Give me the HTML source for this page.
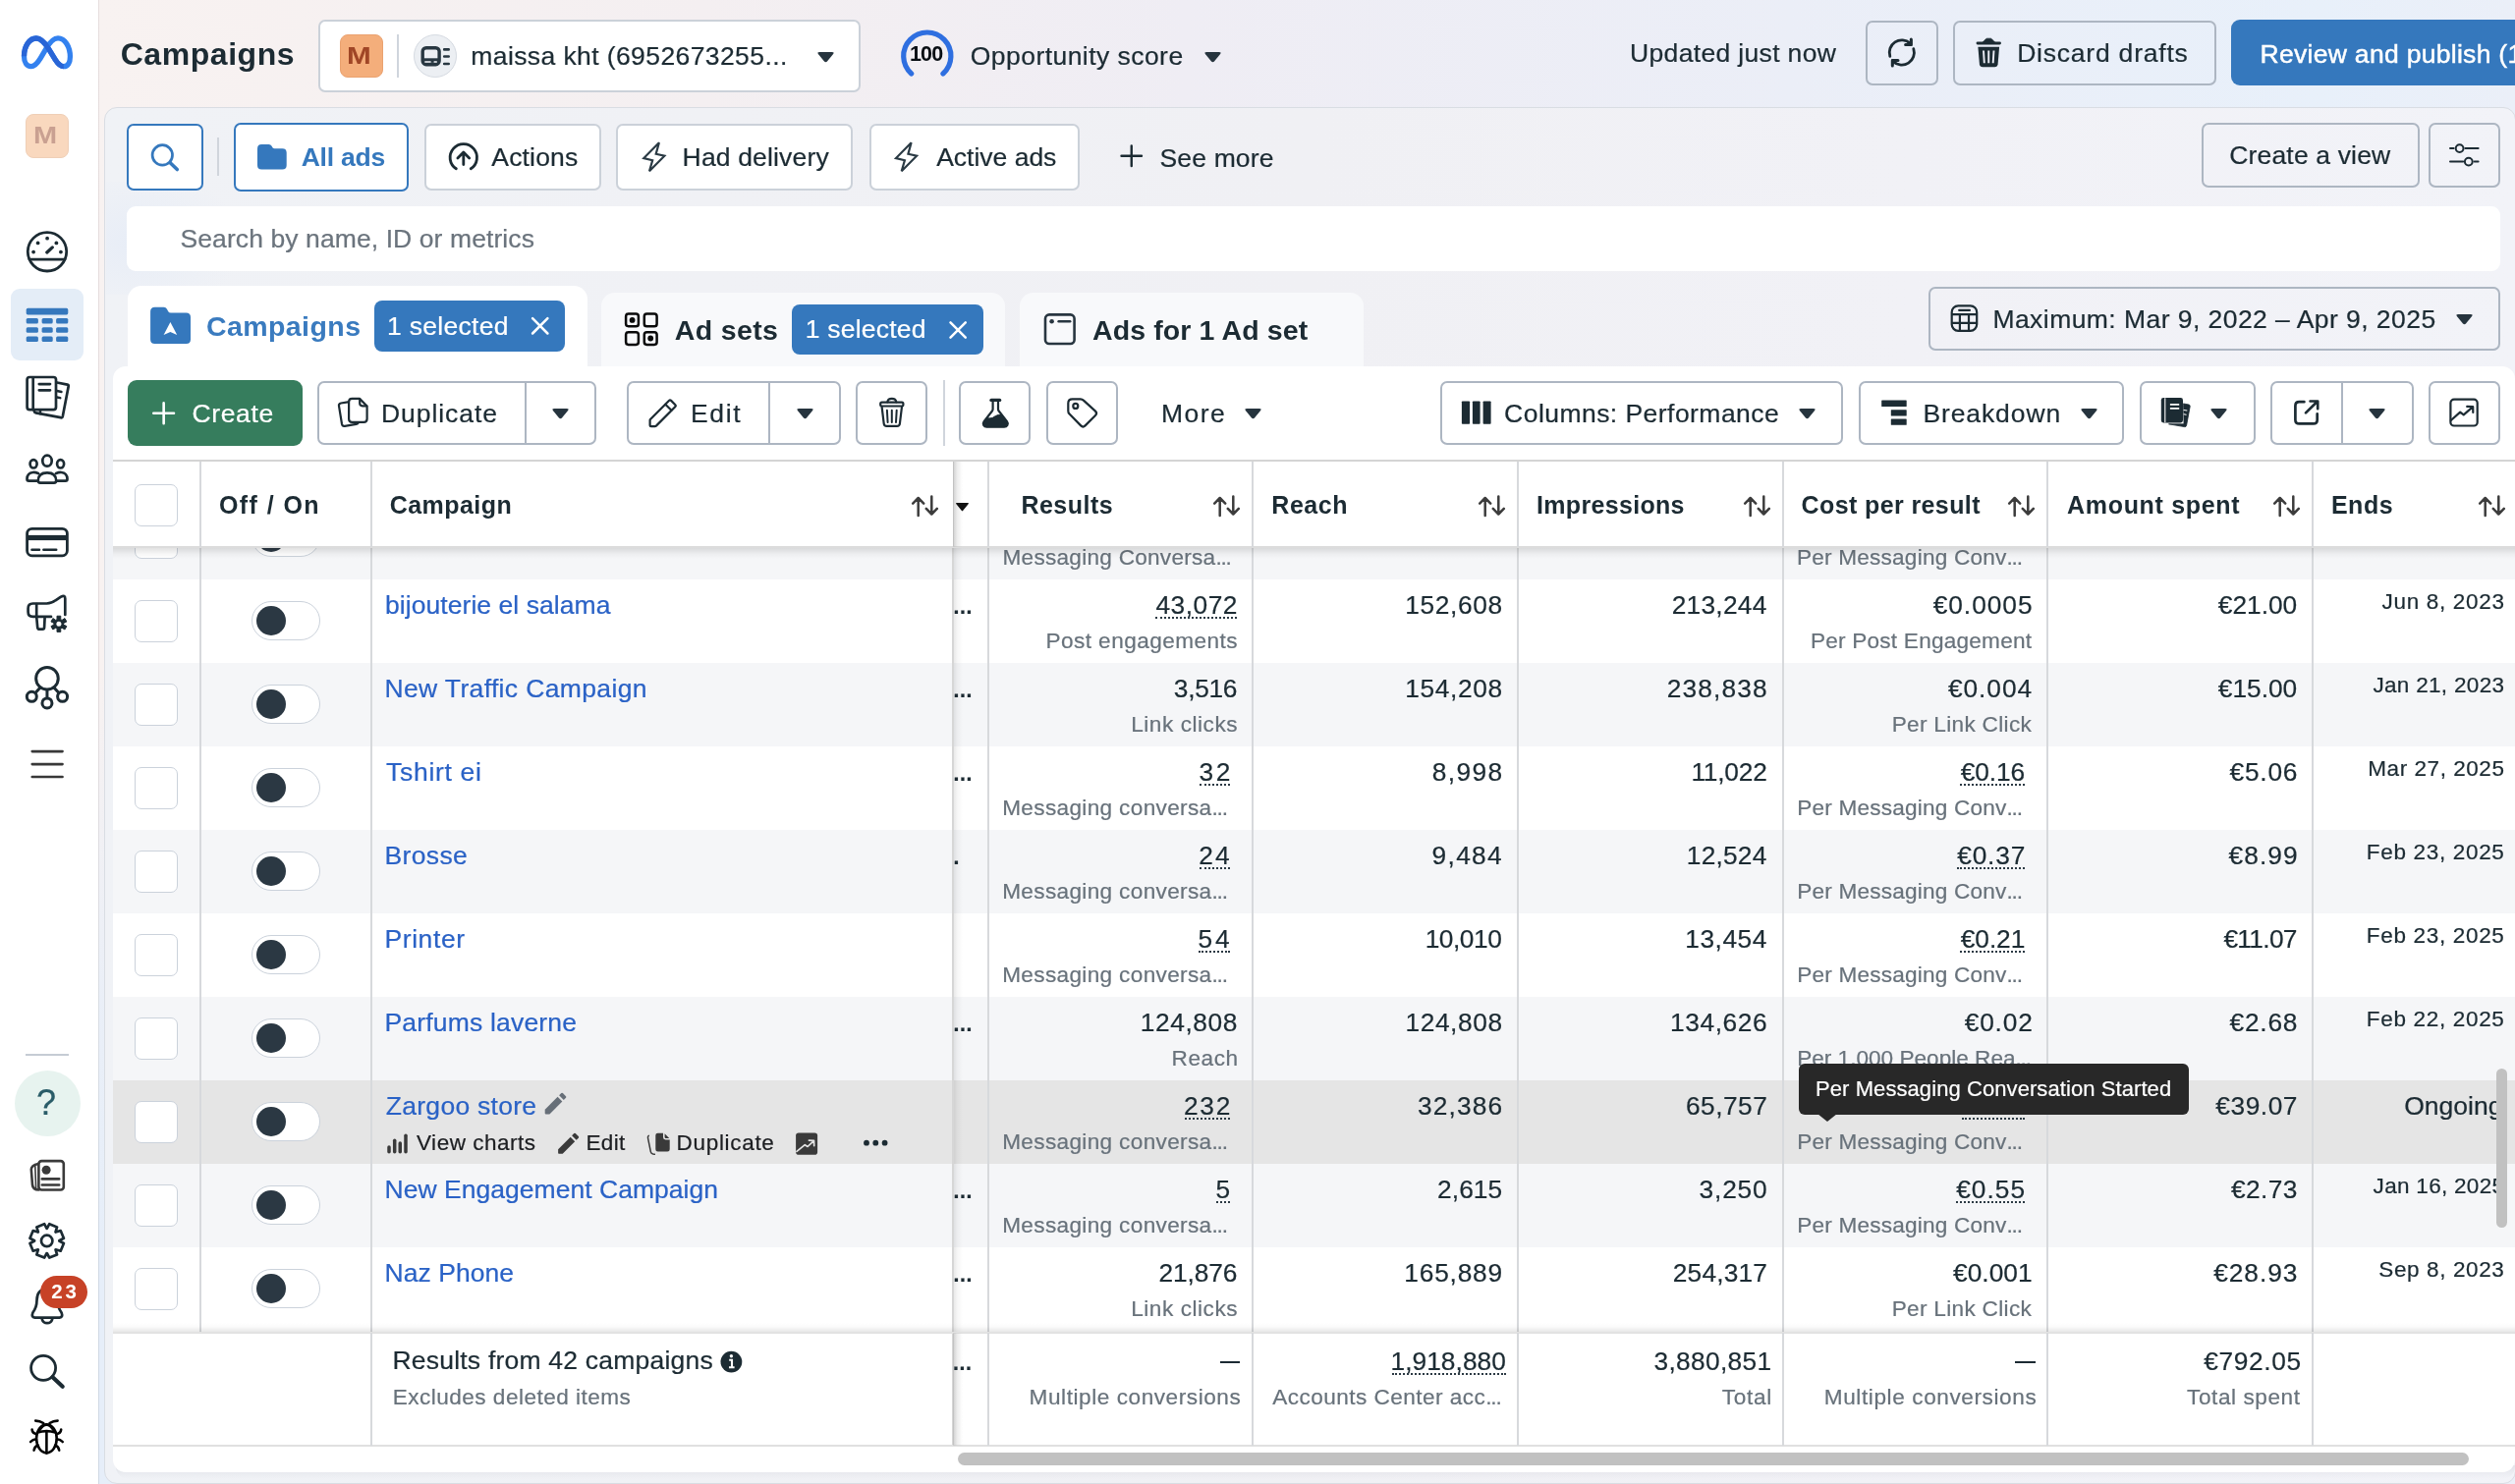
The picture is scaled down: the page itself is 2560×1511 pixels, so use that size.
<!DOCTYPE html>
<html><head><meta charset="utf-8"><title>Campaigns</title>
<style>
html,body{margin:0;padding:0;}
body{width:2560px;height:1511px;overflow:hidden;position:relative;background:#fff;font-family:"Liberation Sans",sans-serif;}
.b{position:absolute;box-sizing:border-box;}
.t{position:absolute;white-space:nowrap;line-height:1;-webkit-text-stroke:0.22px;}
.tb{-webkit-text-stroke:0;}
#root{position:absolute;left:0;top:0;width:2560px;height:1511px;overflow:hidden;will-change:transform;}
.btn{border:2px solid #adb6c2;border-radius:7px;background:#fff;}
.btl{border-color:#cbd1d9;}
.cb{border:1.8px solid #cbd2db;border-radius:7px;background:#fff;}
.tg{border:1.8px solid #cbd2db;border-radius:21px;background:#fff;}
.kn{border-radius:50%;background:#2b3843;}
.du{border-bottom:3px dotted #3b4953;}
svg{overflow:visible;}
</style></head><body><div id="root">
<div class="b" style="left:100.0px;top:0.0px;width:2460.0px;height:1511.0px;background:linear-gradient(90deg,#f8f2f1 0%,#f4eff1 25%,#efedf4 45%,#ebeef7 70%,#e8f0fa 92%,#ebeff8 100%);"></div>
<div class="b" style="left:100.0px;top:0.0px;width:25.0px;height:1511.0px;background:linear-gradient(180deg,rgba(230,238,249,0) 0,rgba(230,238,249,0) 45%,rgba(230,238,249,0.8) 68%,#e6eef9 85%);"></div>
<div class="b" style="left:99.7px;top:0.0px;width:1.8px;height:1511.0px;background:linear-gradient(180deg,#e6dede 0,#e4dcdd 45%,#d9dde4 68%,#d0d9e4 85%);"></div>
<div class="b" style="left:106.0px;top:109.0px;width:2455.0px;height:1401.8px;background:linear-gradient(90deg,#f0f2f6 0,#f0f1f5 25%,#f0f0f4 50%,#f1f1f6 75%,#f2f3f8 100%);border:1.5px solid #d9dde3;border-radius:13px;"></div>
<div class="b" style="left:107.5px;top:185.0px;width:222.5px;height:115.0px;background:radial-gradient(ellipse 110px 75px at 30px 62px,rgba(228,235,247,0.7),rgba(226,234,247,0) 100%);"></div>
<div class="b" style="left:118.0px;top:1492.0px;width:2442.0px;height:14.0px;background:linear-gradient(180deg,rgba(20,30,50,0.07),rgba(20,30,50,0.0));border-radius:0 0 13px 13px;"></div>
<div class="b" style="left:129.0px;top:209.5px;width:2416.0px;height:66.0px;background:#fff;border-radius:9px;"></div>
<div class="b" style="left:26.0px;top:116.2px;width:44.0px;height:44.4px;background:#f9d8be;border-radius:8px;border:1.5px solid #efcfb7;"></div>
<span class="t tb" style="left:34.3px;top:126.4px;font-size:23.85px;color:#c9a091;font-weight:700;transform:scaleX(1.216);transform-origin:left center;">M</span>
<div class="b" style="left:10.7px;top:293.6px;width:74.1px;height:73.8px;background:#e4edf7;border-radius:9px;"></div>
<div class="b" style="left:26.0px;top:1072.5px;width:44.0px;height:2.0px;background:#c5ccd4;"></div>
<div class="b" style="left:14.5px;top:1089.5px;width:67.0px;height:67.0px;background:#e7f3ef;border-radius:50%;"></div>
<svg class="b" style="left:0;top:0" width="100" height="1511" viewBox="0 0 100 1511" fill="none" stroke-linecap="round" stroke-linejoin="round"><path d="M31.7 67.7 C27.2 67.7 24.5 63.4 24.5 57.3 C24.5 47 30 39 36.9 39 C42 39 45.6 43.3 49.6 49.8 L56.2 60.6 C59.1 65.2 61.5 67.7 64.8 67.7 C69 67.7 71.4 63.7 71.4 57.8 C71.4 47.4 66 38.9 59 38.9 C54 38.9 50.4 43.6 46.9 49.6 L41 59.6 C37.6 65.1 35 67.7 31.7 67.7 Z" stroke="#3381ef" stroke-width="5.3"/><path d="M24.5 57.3 C24.5 47 30 39 36.9 39 C42 39 45.6 43.3 49.6 49.8 L56.2 60.6 C59.1 65.2 61.5 67.7 64.8 67.7" stroke="#2965d6" stroke-width="5.3" stroke-linecap="butt"/><g stroke="#1c2b33" stroke-width="2.8"><circle cx="48" cy="256.3" r="19.7"/><path d="M30 264.1 H66"/><path d="M47.8 257 L53.3 251.9" stroke-width="3.2"/></g><circle cx="48.1" cy="242.7" r="1.9" fill="#1c2b33"/><circle cx="38.6" cy="247.4" r="1.9" fill="#1c2b33"/><circle cx="57.4" cy="247.4" r="1.9" fill="#1c2b33"/><circle cx="34.1" cy="256.6" r="1.9" fill="#1c2b33"/><circle cx="61.9" cy="256.6" r="1.9" fill="#1c2b33"/><g fill="#3578bd"><rect x="26.7" y="313.8" width="42.6" height="6.6" rx="1.6"/><rect x="26.7" y="324.1" width="12.2" height="5.5" rx="1.5"/><rect x="42.6" y="324.1" width="11.1" height="5.5" rx="1.5"/><rect x="57.1" y="324.1" width="12.2" height="5.5" rx="1.5"/><rect x="26.7" y="333.3" width="12.2" height="5.5" rx="1.5"/><rect x="42.6" y="333.3" width="11.1" height="5.5" rx="1.5"/><rect x="57.1" y="333.3" width="12.2" height="5.5" rx="1.5"/><rect x="26.7" y="342.5" width="12.2" height="5.5" rx="1.5"/><rect x="42.6" y="342.5" width="11.1" height="5.5" rx="1.5"/><rect x="57.1" y="342.5" width="12.2" height="5.5" rx="1.5"/></g><g stroke="#1c2b33" stroke-width="2.7"><path d="M58 389.5 L68.6 391.6 Q70 392 69.7 393.4 L63.8 424 Q63.4 425.6 61.8 425.2 L36.5 420.3 Q35 420 34.8 418.6"/><path d="M41 418.2 V421.2" stroke-width="2.4"/><path d="M58 398 L62.5 399 M58 404.5 L61.3 405.2" stroke-width="2.4"/><rect x="27.6" y="384" width="29.4" height="33.2" rx="2.6" fill="#fff"/><path d="M33.7 384.5 V417"/><path d="M39.8 391.1 H51 M39.8 397.3 H51"/></g><g stroke="#1c2b33" stroke-width="2.7" fill="#fff"><ellipse cx="34.1" cy="472.3" rx="3.5" ry="4.2"/><ellipse cx="61.6" cy="472.3" rx="3.5" ry="4.2"/><path d="M39 482 Q36 480.8 33.5 481 Q27.6 481.6 27.5 487.8 Q27.5 489.6 29.4 489.6 H37.5"/><path d="M57 482 Q60 480.8 62.5 481 Q68.4 481.6 68.5 487.8 Q68.5 489.6 66.6 489.6 H58.5"/><ellipse cx="48" cy="469.2" rx="4.7" ry="5.5"/><path d="M38.8 489.5 Q38.8 481.3 48 481.3 Q57.2 481.3 57.2 489.5 Q57.2 491.6 55 491.6 H41 Q38.8 491.6 38.8 489.5 Z"/></g><g stroke="#1c2b33" stroke-width="2.8"><rect x="27.6" y="538.3" width="40.8" height="27.5" rx="5"/><path d="M32.5 559.7 H40 M44.4 559.7 H57.2" stroke-width="2.6"/></g><rect x="27" y="544.9" width="42" height="5.2" fill="#1c2b33"/><g stroke="#1c2b33" stroke-width="2.7"><path d="M52 627.9 H33.5 Q28.6 627.9 28.6 623 V619.4 Q28.6 614.5 33.5 614.5 H47.5 Q52.5 614.5 56.5 611.3 L62 607.6 Q66.3 605.6 66.3 609.5 V626"/><path d="M37.2 615 V628 L38.2 638.8 Q38.4 640.7 40.2 640.7 H43.3 Q45 640.7 45.1 638.8 L45.6 628.4"/></g><path d="M64.84 636.07 L67.85 637.67 L65.93 641.00 L63.04 639.19 L61.71 639.96 L61.82 643.37 L57.98 643.37 L58.09 639.96 L56.76 639.19 L53.87 641.00 L51.95 637.67 L54.96 636.07 L54.96 634.53 L51.95 632.93 L53.87 629.60 L56.76 631.41 L58.09 630.64 L57.98 627.23 L61.82 627.23 L61.71 630.64 L63.04 631.41 L65.93 629.60 L67.85 632.93 L64.84 634.53 Z" fill="#1c2b33" stroke="#1c2b33" stroke-width="1"/><circle cx="59.9" cy="635.3" r="2.5" fill="#fff"/><g stroke="#1c2b33" stroke-width="3"><path d="M40.8 700.3 L36 705.5 M47.95 702.5 V710.5 M55.1 700.3 L59.9 705.5"/><circle cx="47.95" cy="690.7" r="11.3"/><circle cx="32.3" cy="709.3" r="5"/><circle cx="47.95" cy="715.9" r="5"/><circle cx="63.6" cy="709.3" r="5"/></g><path d="M32.8 765.1 H63.5 M32.8 778.1 H63.5 M32.8 791 H63.5" stroke="#383838" stroke-width="2.7"/><g stroke="#3a3a3a" stroke-width="2.6"><rect x="39.4" y="1182.1" width="25.4" height="29.4" rx="3"/><path d="M39 1185 Q32 1186.5 31.8 1190.5 L33 1206.5 Q33.5 1211.3 39.4 1211.4"/><path d="M35.8 1187.5 L36.6 1209.5" stroke-width="1.6"/><path d="M42.8 1200.4 H60.2 M42.8 1206.5 H60.2"/></g><circle cx="47.1" cy="1191.3" r="4.5" fill="#3a3a3a"/><path d="M60.30 1263.50 L64.91 1265.99 L61.70 1273.74 L56.68 1272.24 L56.54 1272.38 L58.04 1277.40 L50.29 1280.61 L47.80 1276.00 L47.60 1276.00 L45.11 1280.61 L37.36 1277.40 L38.86 1272.38 L38.72 1272.24 L33.70 1273.74 L30.49 1265.99 L35.10 1263.50 L35.10 1263.30 L30.49 1260.81 L33.70 1253.06 L38.72 1254.56 L38.86 1254.42 L37.36 1249.40 L45.11 1246.19 L47.60 1250.80 L47.80 1250.80 L50.29 1246.19 L58.04 1249.40 L56.54 1254.42 L56.68 1254.56 L61.70 1253.06 L64.91 1260.81 L60.30 1263.30 Z" stroke="#1c2b33" stroke-width="2.7"/><circle cx="47.7" cy="1263.4" r="5.7" stroke="#1c2b33" stroke-width="2.7"/><g stroke="#1c2b33" stroke-width="2.7"><path d="M48 1312.5 Q37.5 1312.5 37.5 1324 Q37.5 1331 33.4 1336.5 Q31.6 1341.2 35.5 1341.6 H60.5 Q64.4 1341.2 62.6 1336.5 Q58.5 1331 58.5 1324 Q58.5 1312.5 48 1312.5 Z"/><path d="M42.8 1343.4 Q44 1347.2 48 1347.2 Q52 1347.2 53.2 1343.4"/></g><circle cx="44.1" cy="1392.8" r="12.5" stroke="#1c2b33" stroke-width="2.8"/><path d="M53.6 1402.3 L63.7 1411.7" stroke="#1c2b33" stroke-width="4.2"/><g stroke="#050505" stroke-width="2.6"><ellipse cx="47.4" cy="1464.8" rx="10.3" ry="14.6"/><path d="M47.4 1457.8 V1479.6"/><path d="M38.3 1458.6 Q47.4 1455.6 56.5 1458.6"/><path d="M40 1456.5 Q47.4 1445 54.8 1456.5"/><path d="M44.2 1449 Q40.5 1446.6 36.2 1446.6 M50.6 1449 Q54.3 1446.6 58.6 1446.6"/><path d="M37.6 1460.3 Q33 1459.5 32.6 1455.6 M57.2 1460.3 Q61.8 1459.5 62.2 1455.6"/><path d="M36.9 1465.3 Q33.3 1465.5 31.1 1468 M57.9 1465.3 Q61.5 1465.5 63.7 1468"/><path d="M38.6 1471.5 Q35.2 1472.7 34.6 1476.6 M56.2 1471.5 Q59.6 1472.7 60.2 1476.6"/></g></svg>
<span class="t" style="left:36.9px;top:1105.0px;font-size:36px;color:#2a5c68;">?</span>
<div class="b" style="left:41.0px;top:1298.5px;width:48.0px;height:33.5px;background:#c74227;border-radius:17px;"></div>
<span class="t tb" style="left:52.3px;top:1304.5px;font-size:20.5px;color:#fff;font-weight:700;letter-spacing:2.777px;">23</span>
<span class="t tb" style="left:122.7px;top:38.5px;font-size:32px;color:#1c2b33;font-weight:700;letter-spacing:0.552px;">Campaigns</span>
<div class="b btn btl" style="left:324.0px;top:19.9px;width:552.0px;height:74.1px;"></div>
<div class="b" style="left:345.5px;top:35.0px;width:44.0px;height:44.0px;background:#f4ae7b;border-radius:8px;border:1px solid #eaa270;"></div>
<span class="t tb" style="left:353.4px;top:45.2px;font-size:23.85px;color:#a04626;font-weight:700;transform:scaleX(1.245);transform-origin:left center;">M</span>
<div class="b" style="left:404.3px;top:35.0px;width:1.7px;height:44.3px;background:#cfd5dd;"></div>
<div class="b" style="left:421.2px;top:35.2px;width:43.8px;height:43.8px;background:#eceff3;border-radius:50%;border:1.5px solid #d5dae1;"></div>
<span class="t" style="left:479.3px;top:44.1px;font-size:26.5px;color:#1c2b33;letter-spacing:0.403px;">maissa kht (6952673255...</span>
<svg class="b" style="left:832px;top:52.5px" width="17" height="10.5" viewBox="0 0 17 10.5"><path d="M2.2 0 H14.8 Q17.8 0 15.9 2.3 L10 9.4 Q8.5 11 7 9.4 L1.1 2.3 Q-0.8 0 2.2 0 Z" fill="#26343e"/></svg>
<span class="t tb" style="left:925.9px;top:44.6px;font-size:21.5px;color:#0a0f14;font-weight:700;letter-spacing:-0.727px;">100</span>
<span class="t" style="left:987.8px;top:44.3px;font-size:26.5px;color:#1c2b33;letter-spacing:0.448px;">Opportunity score</span>
<svg class="b" style="left:1225.5px;top:52.5px" width="17" height="10.5" viewBox="0 0 17 10.5"><path d="M2.2 0 H14.8 Q17.8 0 15.9 2.3 L10 9.4 Q8.5 11 7 9.4 L1.1 2.3 Q-0.8 0 2.2 0 Z" fill="#26343e"/></svg>
<span class="t" style="left:1659.0px;top:40.6px;font-size:26.5px;color:#1c2b33;letter-spacing:0.343px;">Updated just now</span>
<div class="b btn" style="left:1899.2px;top:20.5px;width:73.5px;height:66.0px;background:transparent;"></div>
<div class="b btn" style="left:1987.5px;top:20.5px;width:268.2px;height:66.0px;background:transparent;"></div>
<span class="t" style="left:2053.2px;top:41.1px;font-size:26.5px;color:#1c2b33;letter-spacing:0.780px;">Discard drafts</span>
<div class="b" style="left:2271.0px;top:20.0px;width:309.0px;height:66.5px;background:#3578bd;border-radius:9px;"></div>
<span class="t" style="left:2300.5px;top:41.8px;font-size:26.5px;color:#fff;letter-spacing:0.3px;-webkit-text-stroke:0.45px #fff;">Review and publish (1)</span>
<div class="b btn" style="left:129.0px;top:125.5px;width:77.5px;height:68.0px;border-color:#3578bd;"></div>
<div class="b" style="left:221.0px;top:140.0px;width:2.0px;height:39.0px;background:#d0d5dc;"></div>
<div class="b btn" style="left:238.0px;top:124.5px;width:178.0px;height:70.0px;border-color:#3578bd;"></div>
<span class="t tb" style="left:306.7px;top:146.8px;font-size:26.5px;color:#3578bd;font-weight:700;letter-spacing:-0.222px;">All ads</span>
<div class="b btn btl" style="left:431.5px;top:125.5px;width:180.0px;height:68.3px;"></div>
<span class="t" style="left:500.3px;top:146.8px;font-size:26.5px;color:#1c2b33;letter-spacing:0.168px;">Actions</span>
<div class="b btn btl" style="left:627.3px;top:125.5px;width:241.0px;height:68.3px;"></div>
<span class="t" style="left:694.6px;top:146.8px;font-size:26.5px;color:#1c2b33;letter-spacing:0.162px;">Had delivery</span>
<div class="b btn btl" style="left:884.5px;top:125.5px;width:214.5px;height:68.3px;"></div>
<span class="t" style="left:953.2px;top:146.8px;font-size:26.5px;color:#1c2b33;letter-spacing:-0.008px;">Active ads</span>
<span class="t" style="left:1180.5px;top:148.1px;font-size:26.5px;color:#1c2b33;letter-spacing:0.154px;">See more</span>
<div class="b btn" style="left:2241.0px;top:125.0px;width:222.0px;height:65.5px;background:transparent;"></div>
<span class="t" style="left:2269.3px;top:145.1px;font-size:26.5px;color:#1c2b33;letter-spacing:0.156px;">Create a view</span>
<div class="b btn" style="left:2472.0px;top:125.0px;width:72.5px;height:65.5px;background:transparent;"></div>
<span class="t" style="left:183.5px;top:230.1px;font-size:26.5px;color:#6b747d;letter-spacing:0.091px;">Search by name, ID or metrics</span>
<div class="b" style="left:129.5px;top:291.0px;width:468.0px;height:94.0px;background:#fff;border-radius:14px 14px 0 0;"></div>
<div class="b" style="left:612.0px;top:298.0px;width:411.0px;height:87.0px;background:#f8f9fb;border-radius:14px 14px 0 0;"></div>
<div class="b" style="left:1038.0px;top:298.0px;width:350.0px;height:87.0px;background:#f8f9fb;border-radius:14px 14px 0 0;"></div>
<span class="t tb" style="left:209.9px;top:318.4px;font-size:28.5px;color:#3a7bbf;font-weight:700;letter-spacing:0.440px;">Campaigns</span>
<div class="b" style="left:381.0px;top:306.0px;width:194.0px;height:51.5px;background:#3578bd;border-radius:8px;"></div>
<span class="t" style="left:394.0px;top:318.6px;font-size:26.5px;color:#fff;letter-spacing:0.304px;">1 selected</span>
<span class="t tb" style="left:686.8px;top:321.9px;font-size:28.5px;color:#1c2b33;font-weight:700;letter-spacing:0.354px;">Ad sets</span>
<div class="b" style="left:806.0px;top:309.5px;width:195.0px;height:51.5px;background:#3578bd;border-radius:8px;"></div>
<span class="t" style="left:819.7px;top:322.1px;font-size:26.5px;color:#fff;letter-spacing:0.226px;">1 selected</span>
<span class="t tb" style="left:1112.0px;top:321.9px;font-size:28.5px;color:#1c2b33;font-weight:700;letter-spacing:0.113px;">Ads for 1 Ad set</span>
<div class="b btn" style="left:1962.5px;top:291.5px;width:582.5px;height:65.0px;background:transparent;"></div>
<span class="t" style="left:2028.4px;top:311.6px;font-size:26.5px;color:#1c2b33;letter-spacing:0.447px;">Maximum: Mar 9, 2022 – Apr 9, 2025</span>
<svg class="b" style="left:2500px;top:319.5px" width="17" height="10.5" viewBox="0 0 17 10.5"><path d="M2.2 0 H14.8 Q17.8 0 15.9 2.3 L10 9.4 Q8.5 11 7 9.4 L1.1 2.3 Q-0.8 0 2.2 0 Z" fill="#26343e"/></svg>
<div class="b" style="left:114.5px;top:372.5px;width:2445.5px;height:1126.0px;background:#fff;border-radius:13px;"></div>
<div class="b" style="left:129.5px;top:387.0px;width:178.0px;height:66.5px;background:#367d5d;border-radius:9px;"></div>
<span class="t" style="left:195.4px;top:408.1px;font-size:26.5px;color:#fff;letter-spacing:0.637px;">Create</span>
<div class="b btn" style="left:322.5px;top:387.5px;width:284.5px;height:65.5px;"></div>
<div class="b" style="left:533.5px;top:389.0px;width:2.0px;height:63.0px;background:#adb6c2;"></div>
<span class="t" style="left:387.9px;top:408.1px;font-size:26.5px;color:#1c2b33;letter-spacing:0.959px;">Duplicate</span>
<svg class="b" style="left:562px;top:415.7px" width="17" height="10.5" viewBox="0 0 17 10.5"><path d="M2.2 0 H14.8 Q17.8 0 15.9 2.3 L10 9.4 Q8.5 11 7 9.4 L1.1 2.3 Q-0.8 0 2.2 0 Z" fill="#26343e"/></svg>
<div class="b btn" style="left:637.5px;top:387.5px;width:218.0px;height:65.5px;"></div>
<div class="b" style="left:782.2px;top:389.0px;width:2.0px;height:63.0px;background:#adb6c2;"></div>
<span class="t" style="left:702.9px;top:408.1px;font-size:26.5px;color:#1c2b33;letter-spacing:1.713px;">Edit</span>
<svg class="b" style="left:810.6px;top:415.7px" width="17" height="10.5" viewBox="0 0 17 10.5"><path d="M2.2 0 H14.8 Q17.8 0 15.9 2.3 L10 9.4 Q8.5 11 7 9.4 L1.1 2.3 Q-0.8 0 2.2 0 Z" fill="#26343e"/></svg>
<div class="b btn" style="left:871.3px;top:387.5px;width:73.2px;height:65.5px;"></div>
<div class="b" style="left:959.5px;top:387.0px;width:2.0px;height:66.5px;background:#d0d5dc;"></div>
<div class="b btn" style="left:976.3px;top:387.5px;width:73.2px;height:65.5px;"></div>
<div class="b btn" style="left:1065.0px;top:387.5px;width:73.3px;height:65.5px;"></div>
<span class="t" style="left:1181.9px;top:408.1px;font-size:26.5px;color:#1c2b33;letter-spacing:1.531px;">More</span>
<svg class="b" style="left:1267.3px;top:415.7px" width="17" height="10.5" viewBox="0 0 17 10.5"><path d="M2.2 0 H14.8 Q17.8 0 15.9 2.3 L10 9.4 Q8.5 11 7 9.4 L1.1 2.3 Q-0.8 0 2.2 0 Z" fill="#26343e"/></svg>
<div class="b btn" style="left:1466.0px;top:387.5px;width:410.0px;height:65.5px;"></div>
<span class="t" style="left:1531.1px;top:408.1px;font-size:26.5px;color:#1c2b33;letter-spacing:0.454px;">Columns: Performance</span>
<svg class="b" style="left:1831.3px;top:415.7px" width="17" height="10.5" viewBox="0 0 17 10.5"><path d="M2.2 0 H14.8 Q17.8 0 15.9 2.3 L10 9.4 Q8.5 11 7 9.4 L1.1 2.3 Q-0.8 0 2.2 0 Z" fill="#26343e"/></svg>
<div class="b btn" style="left:1891.7px;top:387.5px;width:270.8px;height:65.5px;"></div>
<span class="t" style="left:1957.4px;top:408.1px;font-size:26.5px;color:#1c2b33;letter-spacing:0.901px;">Breakdown</span>
<svg class="b" style="left:2117.7px;top:415.7px" width="17" height="10.5" viewBox="0 0 17 10.5"><path d="M2.2 0 H14.8 Q17.8 0 15.9 2.3 L10 9.4 Q8.5 11 7 9.4 L1.1 2.3 Q-0.8 0 2.2 0 Z" fill="#26343e"/></svg>
<div class="b btn" style="left:2178.0px;top:387.5px;width:118.0px;height:65.5px;"></div>
<svg class="b" style="left:2250px;top:415.7px" width="17" height="10.5" viewBox="0 0 17 10.5"><path d="M2.2 0 H14.8 Q17.8 0 15.9 2.3 L10 9.4 Q8.5 11 7 9.4 L1.1 2.3 Q-0.8 0 2.2 0 Z" fill="#26343e"/></svg>
<div class="b btn" style="left:2311.0px;top:387.5px;width:145.5px;height:65.5px;"></div>
<div class="b" style="left:2383.0px;top:389.0px;width:2.0px;height:63.0px;background:#adb6c2;"></div>
<svg class="b" style="left:2411px;top:415.7px" width="17" height="10.5" viewBox="0 0 17 10.5"><path d="M2.2 0 H14.8 Q17.8 0 15.9 2.3 L10 9.4 Q8.5 11 7 9.4 L1.1 2.3 Q-0.8 0 2.2 0 Z" fill="#26343e"/></svg>
<div class="b btn" style="left:2471.5px;top:387.5px;width:73.5px;height:65.5px;"></div>
<div class="b" style="left:114.5px;top:557.0px;width:2445.5px;height:33.0px;background:#f5f6f8;"></div>
<div class="b cb" style="left:137.3px;top:525.5px;width:43.6px;height:43.5px;"></div>
<div class="b tg" style="left:256.1px;top:527.2px;width:69.6px;height:40.1px;"></div>
<div class="b kn" style="left:261.1px;top:532.4px;width:30.0px;height:29.9px;"></div>
<span class="t" style="left:1020.5px;top:556.7px;font-size:22.6px;color:#68727b;letter-spacing:0.259px;">Messaging Conversa<span style="letter-spacing:-1.2px">...</span></span>
<span class="t" style="left:1829.0px;top:556.7px;font-size:22.6px;color:#68727b;letter-spacing:0.210px;">Per Messaging Conv<span style="letter-spacing:-1.2px">...</span></span>
<div class="b" style="left:114.5px;top:590.0px;width:2445.5px;height:85.0px;background:#fff;"></div>
<div class="b cb" style="left:137.3px;top:610.5px;width:43.6px;height:43.5px;"></div>
<div class="b tg" style="left:256.1px;top:612.2px;width:69.6px;height:40.1px;"></div>
<div class="b kn" style="left:261.1px;top:617.4px;width:30.0px;height:29.9px;"></div>
<span class="t" style="left:392.0px;top:602.6px;font-size:26.5px;color:#2a62c6;letter-spacing:0.061px;">bijouterie el salama</span>
<span class="t" style="left:969.1px;top:597.9px;font-size:32px;color:#1c2b33;letter-spacing:-2.480px;">...</span>
<span class="t" style="left:1176.4px;top:602.7px;font-size:26.3px;color:#1c2b33;letter-spacing:0.526px;">43,072</span>
<div class="b" style="left:1176.4px;top:626.6px;width:82.7px;height:3.4px;border-bottom:2.7px dotted #2c3a44;"></div>
<span class="t" style="left:1064.4px;top:641.7px;font-size:22.6px;color:#68727b;letter-spacing:0.448px;">Post engagements</span>
<span class="t" style="left:1430.3px;top:602.7px;font-size:26.3px;color:#1c2b33;letter-spacing:0.608px;">152,608</span>
<span class="t" style="left:1701.7px;top:602.7px;font-size:26.3px;color:#1c2b33;letter-spacing:0.266px;">213,244</span>
<span class="t" style="left:1967.7px;top:602.7px;font-size:26.3px;color:#1c2b33;letter-spacing:0.968px;">€0.0005</span>
<span class="t" style="left:1842.9px;top:641.7px;font-size:22.6px;color:#68727b;letter-spacing:0.227px;">Per Post Engagement</span>
<span class="t" style="left:2257.8px;top:602.7px;font-size:26.3px;color:#1c2b33;letter-spacing:-0.005px;">€21.00</span>
<span class="t" style="left:2424.5px;top:602.3px;font-size:22.5px;color:#1c2b33;letter-spacing:0.688px;">Jun 8, 2023</span>
<div class="b" style="left:114.5px;top:675.0px;width:2445.5px;height:85.0px;background:#f5f6f8;"></div>
<div class="b cb" style="left:137.3px;top:695.5px;width:43.6px;height:43.5px;"></div>
<div class="b tg" style="left:256.1px;top:697.2px;width:69.6px;height:40.1px;"></div>
<div class="b kn" style="left:261.1px;top:702.4px;width:30.0px;height:29.9px;"></div>
<span class="t" style="left:391.5px;top:687.6px;font-size:26.5px;color:#2a62c6;letter-spacing:0.357px;">New Traffic Campaign</span>
<span class="t" style="left:969.1px;top:682.9px;font-size:32px;color:#1c2b33;letter-spacing:-2.480px;">...</span>
<span class="t" style="left:1194.8px;top:687.7px;font-size:26.3px;color:#1c2b33;letter-spacing:-0.294px;">3,516</span>
<span class="t" style="left:1151.2px;top:726.7px;font-size:22.6px;color:#68727b;letter-spacing:0.546px;">Link clicks</span>
<span class="t" style="left:1430.3px;top:687.7px;font-size:26.3px;color:#1c2b33;letter-spacing:0.608px;">154,208</span>
<span class="t" style="left:1696.7px;top:687.7px;font-size:26.3px;color:#1c2b33;letter-spacing:1.165px;">238,838</span>
<span class="t" style="left:1982.9px;top:687.7px;font-size:26.3px;color:#1c2b33;letter-spacing:0.962px;">€0.004</span>
<span class="t" style="left:1925.7px;top:726.7px;font-size:22.6px;color:#68727b;letter-spacing:0.307px;">Per Link Click</span>
<span class="t" style="left:2257.8px;top:687.7px;font-size:26.3px;color:#1c2b33;letter-spacing:-0.005px;">€15.00</span>
<span class="t" style="left:2415.4px;top:687.3px;font-size:22.5px;color:#1c2b33;letter-spacing:0.317px;">Jan 21, 2023</span>
<div class="b" style="left:114.5px;top:760.0px;width:2445.5px;height:85.0px;background:#fff;"></div>
<div class="b cb" style="left:137.3px;top:780.5px;width:43.6px;height:43.5px;"></div>
<div class="b tg" style="left:256.1px;top:782.2px;width:69.6px;height:40.1px;"></div>
<div class="b kn" style="left:261.1px;top:787.4px;width:30.0px;height:29.9px;"></div>
<span class="t" style="left:393.1px;top:772.6px;font-size:26.5px;color:#2a62c6;letter-spacing:0.683px;">Tshirt ei</span>
<span class="t" style="left:969.1px;top:767.9px;font-size:32px;color:#1c2b33;letter-spacing:-2.480px;">...</span>
<span class="t" style="left:1220.6px;top:772.7px;font-size:26.3px;color:#1c2b33;letter-spacing:2.411px;">32</span>
<div class="b" style="left:1221.0px;top:796.6px;width:30.8px;height:3.4px;border-bottom:2.7px dotted #2c3a44;"></div>
<span class="t" style="left:1020.2px;top:811.7px;font-size:22.6px;color:#68727b;letter-spacing:0.338px;">Messaging conversa<span style="letter-spacing:-1.2px">...</span></span>
<span class="t" style="left:1457.7px;top:772.7px;font-size:26.3px;color:#1c2b33;letter-spacing:1.388px;">8,998</span>
<span class="t" style="left:1721.4px;top:772.7px;font-size:26.3px;color:#1c2b33;letter-spacing:-0.210px;">11,022</span>
<span class="t" style="left:1995.8px;top:772.7px;font-size:26.3px;color:#1c2b33;letter-spacing:-0.117px;">€0.16</span>
<div class="b" style="left:1995.4px;top:796.6px;width:65.4px;height:3.4px;border-bottom:2.7px dotted #2c3a44;"></div>
<span class="t" style="left:1829.2px;top:811.7px;font-size:22.6px;color:#68727b;letter-spacing:0.199px;">Per Messaging Conv<span style="letter-spacing:-1.2px">...</span></span>
<span class="t" style="left:2269.5px;top:772.7px;font-size:26.3px;color:#1c2b33;letter-spacing:0.783px;">€5.06</span>
<span class="t" style="left:2410.3px;top:772.3px;font-size:22.5px;color:#1c2b33;letter-spacing:0.552px;">Mar 27, 2025</span>
<div class="b" style="left:114.5px;top:845.0px;width:2445.5px;height:85.0px;background:#f5f6f8;"></div>
<div class="b cb" style="left:137.3px;top:865.5px;width:43.6px;height:43.5px;"></div>
<div class="b tg" style="left:256.1px;top:867.2px;width:69.6px;height:40.1px;"></div>
<div class="b kn" style="left:261.1px;top:872.4px;width:30.0px;height:29.9px;"></div>
<span class="t" style="left:391.5px;top:857.6px;font-size:26.5px;color:#2a62c6;letter-spacing:0.353px;">Brosse</span>
<span class="t" style="left:969.1px;top:852.9px;font-size:32px;color:#1c2b33;">.</span>
<span class="t" style="left:1220.2px;top:857.7px;font-size:26.3px;color:#1c2b33;letter-spacing:2.280px;">24</span>
<div class="b" style="left:1221.0px;top:881.6px;width:30.8px;height:3.4px;border-bottom:2.7px dotted #2c3a44;"></div>
<span class="t" style="left:1020.2px;top:896.7px;font-size:22.6px;color:#68727b;letter-spacing:0.338px;">Messaging conversa<span style="letter-spacing:-1.2px">...</span></span>
<span class="t" style="left:1457.6px;top:857.7px;font-size:26.3px;color:#1c2b33;letter-spacing:1.323px;">9,484</span>
<span class="t" style="left:1716.8px;top:857.7px;font-size:26.3px;color:#1c2b33;letter-spacing:0.210px;">12,524</span>
<span class="t" style="left:1992.2px;top:857.7px;font-size:26.3px;color:#1c2b33;letter-spacing:0.816px;">€0.37</span>
<div class="b" style="left:1991.8px;top:881.6px;width:69.0px;height:3.4px;border-bottom:2.7px dotted #2c3a44;"></div>
<span class="t" style="left:1829.2px;top:896.7px;font-size:22.6px;color:#68727b;letter-spacing:0.199px;">Per Messaging Conv<span style="letter-spacing:-1.2px">...</span></span>
<span class="t" style="left:2268.5px;top:857.7px;font-size:26.3px;color:#1c2b33;letter-spacing:1.066px;">€8.99</span>
<span class="t" style="left:2408.8px;top:857.3px;font-size:22.5px;color:#1c2b33;letter-spacing:0.678px;">Feb 23, 2025</span>
<div class="b" style="left:114.5px;top:930.0px;width:2445.5px;height:85.0px;background:#fff;"></div>
<div class="b cb" style="left:137.3px;top:950.5px;width:43.6px;height:43.5px;"></div>
<div class="b tg" style="left:256.1px;top:952.2px;width:69.6px;height:40.1px;"></div>
<div class="b kn" style="left:261.1px;top:957.4px;width:30.0px;height:29.9px;"></div>
<span class="t" style="left:391.5px;top:942.6px;font-size:26.5px;color:#2a62c6;letter-spacing:0.579px;">Printer</span>
<span class="t" style="left:1219.4px;top:942.7px;font-size:26.3px;color:#1c2b33;letter-spacing:3.017px;">54</span>
<div class="b" style="left:1220.0px;top:966.6px;width:31.8px;height:3.4px;border-bottom:2.7px dotted #2c3a44;"></div>
<span class="t" style="left:1020.2px;top:981.7px;font-size:22.6px;color:#68727b;letter-spacing:0.338px;">Messaging conversa<span style="letter-spacing:-1.2px">...</span></span>
<span class="t" style="left:1450.7px;top:942.7px;font-size:26.3px;color:#1c2b33;letter-spacing:-0.457px;">10,010</span>
<span class="t" style="left:1715.3px;top:942.7px;font-size:26.3px;color:#1c2b33;letter-spacing:0.510px;">13,454</span>
<span class="t" style="left:1995.8px;top:942.7px;font-size:26.3px;color:#1c2b33;letter-spacing:-0.084px;">€0.21</span>
<div class="b" style="left:1995.4px;top:966.6px;width:65.4px;height:3.4px;border-bottom:2.7px dotted #2c3a44;"></div>
<span class="t" style="left:1829.2px;top:981.7px;font-size:22.6px;color:#68727b;letter-spacing:0.199px;">Per Messaging Conv<span style="letter-spacing:-1.2px">...</span></span>
<span class="t" style="left:2263.4px;top:942.7px;font-size:26.3px;color:#1c2b33;letter-spacing:-0.678px;">€11.07</span>
<span class="t" style="left:2408.8px;top:942.3px;font-size:22.5px;color:#1c2b33;letter-spacing:0.678px;">Feb 23, 2025</span>
<div class="b" style="left:114.5px;top:1015.0px;width:2445.5px;height:85.0px;background:#f5f6f8;"></div>
<div class="b cb" style="left:137.3px;top:1035.5px;width:43.6px;height:43.5px;"></div>
<div class="b tg" style="left:256.1px;top:1037.2px;width:69.6px;height:40.1px;"></div>
<div class="b kn" style="left:261.1px;top:1042.4px;width:30.0px;height:29.9px;"></div>
<span class="t" style="left:391.5px;top:1027.6px;font-size:26.5px;color:#2a62c6;letter-spacing:0.183px;">Parfums laverne</span>
<span class="t" style="left:969.1px;top:1022.9px;font-size:32px;color:#1c2b33;letter-spacing:-2.480px;">...</span>
<span class="t" style="left:1160.8px;top:1027.7px;font-size:26.3px;color:#1c2b33;letter-spacing:0.575px;">124,808</span>
<span class="t" style="left:1192.5px;top:1066.7px;font-size:22.6px;color:#68727b;letter-spacing:0.587px;">Reach</span>
<span class="t" style="left:1430.5px;top:1027.7px;font-size:26.3px;color:#1c2b33;letter-spacing:0.575px;">124,808</span>
<span class="t" style="left:1700.0px;top:1027.7px;font-size:26.3px;color:#1c2b33;letter-spacing:0.608px;">134,626</span>
<span class="t" style="left:1999.7px;top:1027.7px;font-size:26.3px;color:#1c2b33;letter-spacing:0.816px;">€0.02</span>
<span class="t" style="left:1829.2px;top:1066.7px;font-size:22.6px;color:#68727b;">Per 1,000 People Rea<span style="letter-spacing:-1.2px">...</span></span>
<span class="t" style="left:2269.5px;top:1027.7px;font-size:26.3px;color:#1c2b33;letter-spacing:0.783px;">€2.68</span>
<span class="t" style="left:2408.8px;top:1027.3px;font-size:22.5px;color:#1c2b33;letter-spacing:0.678px;">Feb 22, 2025</span>
<div class="b" style="left:114.5px;top:1100.0px;width:2445.5px;height:85.0px;background:#e5e5e5;"></div>
<div class="b cb" style="left:137.3px;top:1120.5px;width:43.6px;height:43.5px;"></div>
<div class="b tg" style="left:256.1px;top:1122.2px;width:69.6px;height:40.1px;"></div>
<div class="b kn" style="left:261.1px;top:1127.4px;width:30.0px;height:29.9px;"></div>
<span class="t" style="left:392.8px;top:1112.6px;font-size:26.5px;color:#2a62c6;letter-spacing:0.273px;">Zargoo store</span>
<span class="t" style="left:1204.9px;top:1112.7px;font-size:26.3px;color:#1c2b33;letter-spacing:1.754px;">232</span>
<div class="b" style="left:1205.7px;top:1136.6px;width:46.1px;height:3.4px;border-bottom:2.7px dotted #2c3a44;"></div>
<span class="t" style="left:1020.2px;top:1151.7px;font-size:22.6px;color:#68727b;letter-spacing:0.338px;">Messaging conversa<span style="letter-spacing:-1.2px">...</span></span>
<span class="t" style="left:1443.1px;top:1112.7px;font-size:26.3px;color:#1c2b33;letter-spacing:1.099px;">32,386</span>
<span class="t" style="left:1716.0px;top:1112.7px;font-size:26.3px;color:#1c2b33;letter-spacing:0.484px;">65,757</span>
<div class="b" style="left:1996.5px;top:1136.6px;width:64.5px;height:3.4px;border-bottom:2.7px dotted #2c3a44;"></div>
<span class="t" style="left:1829.2px;top:1151.7px;font-size:22.6px;color:#68727b;letter-spacing:0.199px;">Per Messaging Conv<span style="letter-spacing:-1.2px">...</span></span>
<span class="t" style="left:2255.3px;top:1112.7px;font-size:26.3px;color:#1c2b33;letter-spacing:0.547px;">€39.07</span>
<span class="t" style="left:2447.2px;top:1112.6px;font-size:26.5px;color:#1c2b33;">Ongoing</span>
<div class="b" style="left:114.5px;top:1185.0px;width:2445.5px;height:85.0px;background:#f5f6f8;"></div>
<div class="b cb" style="left:137.3px;top:1205.5px;width:43.6px;height:43.5px;"></div>
<div class="b tg" style="left:256.1px;top:1207.2px;width:69.6px;height:40.1px;"></div>
<div class="b kn" style="left:261.1px;top:1212.4px;width:30.0px;height:29.9px;"></div>
<span class="t" style="left:391.5px;top:1197.6px;font-size:26.5px;color:#2a62c6;letter-spacing:0.032px;">New Engagement Campaign</span>
<span class="t" style="left:969.1px;top:1192.9px;font-size:32px;color:#1c2b33;letter-spacing:-2.480px;">...</span>
<span class="t" style="left:1237.5px;top:1197.7px;font-size:26.3px;color:#1c2b33;">5</span>
<div class="b" style="left:1238.0px;top:1221.6px;width:13.8px;height:3.4px;border-bottom:2.7px dotted #2c3a44;"></div>
<span class="t" style="left:1020.2px;top:1236.7px;font-size:22.6px;color:#68727b;letter-spacing:0.338px;">Messaging conversa<span style="letter-spacing:-1.2px">...</span></span>
<span class="t" style="left:1463.1px;top:1197.7px;font-size:26.3px;color:#1c2b33;letter-spacing:0.054px;">2,615</span>
<span class="t" style="left:1729.6px;top:1197.7px;font-size:26.3px;color:#1c2b33;letter-spacing:0.823px;">3,250</span>
<span class="t" style="left:1991.2px;top:1197.7px;font-size:26.3px;color:#1c2b33;letter-spacing:1.033px;">€0.55</span>
<div class="b" style="left:1990.8px;top:1221.6px;width:70.0px;height:3.4px;border-bottom:2.7px dotted #2c3a44;"></div>
<span class="t" style="left:1829.2px;top:1236.7px;font-size:22.6px;color:#68727b;letter-spacing:0.199px;">Per Messaging Conv<span style="letter-spacing:-1.2px">...</span></span>
<span class="t" style="left:2271.0px;top:1197.7px;font-size:26.3px;color:#1c2b33;letter-spacing:0.408px;">€2.73</span>
<span class="t" style="left:2415.6px;top:1197.3px;font-size:22.5px;color:#1c2b33;letter-spacing:0.299px;">Jan 16, 2025</span>
<div class="b" style="left:114.5px;top:1270.0px;width:2445.5px;height:86.5px;background:#fff;"></div>
<div class="b cb" style="left:137.3px;top:1290.5px;width:43.6px;height:43.5px;"></div>
<div class="b tg" style="left:256.1px;top:1292.2px;width:69.6px;height:40.1px;"></div>
<div class="b kn" style="left:261.1px;top:1297.4px;width:30.0px;height:29.9px;"></div>
<span class="t" style="left:391.5px;top:1282.6px;font-size:26.5px;color:#2a62c6;letter-spacing:0.055px;">Naz Phone</span>
<span class="t" style="left:969.1px;top:1277.9px;font-size:32px;color:#1c2b33;letter-spacing:-2.480px;">...</span>
<span class="t" style="left:1179.6px;top:1282.7px;font-size:26.3px;color:#1c2b33;letter-spacing:-0.142px;">21,876</span>
<span class="t" style="left:1151.2px;top:1321.7px;font-size:22.6px;color:#68727b;letter-spacing:0.546px;">Link clicks</span>
<span class="t" style="left:1429.3px;top:1282.7px;font-size:26.3px;color:#1c2b33;letter-spacing:0.797px;">165,889</span>
<span class="t" style="left:1702.8px;top:1282.7px;font-size:26.3px;color:#1c2b33;letter-spacing:0.171px;">254,317</span>
<span class="t" style="left:1988.0px;top:1282.7px;font-size:26.3px;color:#1c2b33;letter-spacing:0.047px;">€0.001</span>
<span class="t" style="left:1925.7px;top:1321.7px;font-size:22.6px;color:#68727b;letter-spacing:0.307px;">Per Link Click</span>
<span class="t" style="left:2253.2px;top:1282.7px;font-size:26.3px;color:#1c2b33;letter-spacing:0.941px;">€28.93</span>
<span class="t" style="left:2421.3px;top:1282.3px;font-size:22.5px;color:#1c2b33;letter-spacing:0.622px;">Sep 8, 2023</span>
<span class="t" style="left:424.0px;top:1152.8px;font-size:22.5px;color:#1c1e21;letter-spacing:0.521px;">View charts</span>
<span class="t" style="left:596.4px;top:1152.8px;font-size:22.5px;color:#1c1e21;letter-spacing:0.367px;">Edit</span>
<span class="t" style="left:688.6px;top:1152.8px;font-size:22.5px;color:#1c1e21;letter-spacing:0.684px;">Duplicate</span>
<div class="b" style="left:202.8px;top:557.0px;width:2.0px;height:799.5px;background:#d7d9dc;"></div>
<div class="b" style="left:376.6px;top:557.0px;width:2.0px;height:915.0px;background:#d7d9dc;"></div>
<div class="b" style="left:1004.5px;top:557.0px;width:2.0px;height:915.0px;background:#d7d9dc;"></div>
<div class="b" style="left:1274.3px;top:557.0px;width:2.0px;height:915.0px;background:#d7d9dc;"></div>
<div class="b" style="left:1544.0px;top:557.0px;width:2.0px;height:915.0px;background:#d7d9dc;"></div>
<div class="b" style="left:1813.8px;top:557.0px;width:2.0px;height:915.0px;background:#d7d9dc;"></div>
<div class="b" style="left:2083.4px;top:557.0px;width:2.0px;height:915.0px;background:#d7d9dc;"></div>
<div class="b" style="left:2353.3px;top:557.0px;width:2.0px;height:915.0px;background:#d7d9dc;"></div>
<div class="b" style="left:970.0px;top:470.0px;width:10.0px;height:1002.0px;background:linear-gradient(90deg,rgba(0,0,0,0.10),rgba(0,0,0,0.035) 45%,rgba(0,0,0,0));"></div>
<div class="b" style="left:969.0px;top:470.0px;width:1.5px;height:1002.0px;background:#d6d6d6;"></div>
<div class="b" style="left:114.5px;top:557.0px;width:2445.5px;height:12.0px;background:linear-gradient(180deg,rgba(0,0,0,0.13),rgba(0,0,0,0.03) 60%,rgba(0,0,0,0));"></div>
<div class="b" style="left:114.5px;top:468.5px;width:855.5px;height:88.5px;background:#fff;"></div>
<div class="b" style="left:980.0px;top:468.5px;width:1580.0px;height:88.5px;background:#fff;"></div>
<div class="b" style="left:114.5px;top:468.3px;width:2445.5px;height:2.0px;background:#d4d4d4;"></div>
<div class="b" style="left:114.5px;top:556.0px;width:2445.5px;height:1.5px;background:#dcdcdc;"></div>
<div class="b" style="left:202.8px;top:470.0px;width:2.0px;height:87.0px;background:#d7d9dc;"></div>
<div class="b" style="left:376.6px;top:470.0px;width:2.0px;height:87.0px;background:#d7d9dc;"></div>
<div class="b" style="left:1004.5px;top:470.0px;width:2.0px;height:87.0px;background:#d7d9dc;"></div>
<div class="b" style="left:1274.3px;top:470.0px;width:2.0px;height:87.0px;background:#d7d9dc;"></div>
<div class="b" style="left:1544.0px;top:470.0px;width:2.0px;height:87.0px;background:#d7d9dc;"></div>
<div class="b" style="left:1813.8px;top:470.0px;width:2.0px;height:87.0px;background:#d7d9dc;"></div>
<div class="b" style="left:2083.4px;top:470.0px;width:2.0px;height:87.0px;background:#d7d9dc;"></div>
<div class="b" style="left:2353.3px;top:470.0px;width:2.0px;height:87.0px;background:#d7d9dc;"></div>
<div class="b" style="left:970.0px;top:470.0px;width:10.0px;height:87.0px;background:linear-gradient(90deg,rgba(0,0,0,0.10),rgba(0,0,0,0.035) 45%,rgba(0,0,0,0));"></div>
<div class="b cb" style="left:137.3px;top:492.5px;width:43.6px;height:43.5px;"></div>
<span class="t tb" style="left:223.0px;top:501.8px;font-size:25px;color:#1c2b33;font-weight:700;letter-spacing:1.411px;">Off / On</span>
<span class="t tb" style="left:396.7px;top:501.8px;font-size:25px;color:#1c2b33;font-weight:700;letter-spacing:0.461px;">Campaign</span>
<span class="t tb" style="left:1039.4px;top:501.8px;font-size:25px;color:#1c2b33;font-weight:700;letter-spacing:0.508px;">Results</span>
<span class="t tb" style="left:1294.3px;top:501.8px;font-size:25px;color:#1c2b33;font-weight:700;letter-spacing:0.531px;">Reach</span>
<span class="t tb" style="left:1564.0px;top:501.8px;font-size:25px;color:#1c2b33;font-weight:700;letter-spacing:0.325px;">Impressions</span>
<span class="t tb" style="left:1833.6px;top:501.8px;font-size:25px;color:#1c2b33;font-weight:700;letter-spacing:0.389px;">Cost per result</span>
<span class="t tb" style="left:2104.1px;top:501.8px;font-size:25px;color:#1c2b33;font-weight:700;letter-spacing:0.668px;">Amount spent</span>
<span class="t tb" style="left:2372.9px;top:501.8px;font-size:25px;color:#1c2b33;font-weight:700;letter-spacing:0.558px;">Ends</span>
<svg class="b" style="left:928.2px;top:504.5px;" width="27.0" height="20.5" viewBox="0 0 27 20.5"><path d="M6.7 20 V2.2 M1.2 7.6 L6.7 2 L12.2 7.6 M20.3 0.5 V18.3 M14.8 12.9 L20.3 18.5 L25.8 12.9" fill="none" stroke="#3c3c3c" stroke-width="2.5" stroke-linecap="round" stroke-linejoin="round"/></svg>
<svg class="b" style="left:1235.3px;top:504.5px;" width="27.0" height="20.5" viewBox="0 0 27 20.5"><path d="M6.7 20 V2.2 M1.2 7.6 L6.7 2 L12.2 7.6 M20.3 0.5 V18.3 M14.8 12.9 L20.3 18.5 L25.8 12.9" fill="none" stroke="#3c3c3c" stroke-width="2.5" stroke-linecap="round" stroke-linejoin="round"/></svg>
<svg class="b" style="left:1505.0px;top:504.5px;" width="27.0" height="20.5" viewBox="0 0 27 20.5"><path d="M6.7 20 V2.2 M1.2 7.6 L6.7 2 L12.2 7.6 M20.3 0.5 V18.3 M14.8 12.9 L20.3 18.5 L25.8 12.9" fill="none" stroke="#3c3c3c" stroke-width="2.5" stroke-linecap="round" stroke-linejoin="round"/></svg>
<svg class="b" style="left:1774.8px;top:504.5px;" width="27.0" height="20.5" viewBox="0 0 27 20.5"><path d="M6.7 20 V2.2 M1.2 7.6 L6.7 2 L12.2 7.6 M20.3 0.5 V18.3 M14.8 12.9 L20.3 18.5 L25.8 12.9" fill="none" stroke="#3c3c3c" stroke-width="2.5" stroke-linecap="round" stroke-linejoin="round"/></svg>
<svg class="b" style="left:2044.0px;top:504.5px;" width="27.0" height="20.5" viewBox="0 0 27 20.5"><path d="M6.7 20 V2.2 M1.2 7.6 L6.7 2 L12.2 7.6 M20.3 0.5 V18.3 M14.8 12.9 L20.3 18.5 L25.8 12.9" fill="none" stroke="#3c3c3c" stroke-width="2.5" stroke-linecap="round" stroke-linejoin="round"/></svg>
<svg class="b" style="left:2314.0px;top:504.5px;" width="27.0" height="20.5" viewBox="0 0 27 20.5"><path d="M6.7 20 V2.2 M1.2 7.6 L6.7 2 L12.2 7.6 M20.3 0.5 V18.3 M14.8 12.9 L20.3 18.5 L25.8 12.9" fill="none" stroke="#3c3c3c" stroke-width="2.5" stroke-linecap="round" stroke-linejoin="round"/></svg>
<svg class="b" style="left:2522.8px;top:504.5px;" width="27.0" height="20.5" viewBox="0 0 27 20.5"><path d="M6.7 20 V2.2 M1.2 7.6 L6.7 2 L12.2 7.6 M20.3 0.5 V18.3 M14.8 12.9 L20.3 18.5 L25.8 12.9" fill="none" stroke="#3c3c3c" stroke-width="2.5" stroke-linecap="round" stroke-linejoin="round"/></svg>
<svg class="b" style="left:972.5px;top:512px" width="13" height="8.5" viewBox="0 0 13 8.5"><path d="M0.8 0 H12.2 Q13.6 0 12.6 1.2 L7.3 7.8 Q6.5 8.8 5.7 7.8 L0.4 1.2 Q-0.6 0 0.8 0 Z" fill="#111"/></svg>
<div class="b" style="left:114.5px;top:1347.0px;width:2445.5px;height:10.0px;background:linear-gradient(0deg,rgba(0,0,0,0.10),rgba(0,0,0,0.02) 60%,rgba(0,0,0,0));"></div>
<div class="b" style="left:114.5px;top:1356.5px;width:854.0px;height:115.5px;background:#fff;"></div>
<div class="b" style="left:980.0px;top:1356.5px;width:1580.0px;height:115.5px;background:#fff;"></div>
<div class="b" style="left:114.5px;top:1356.0px;width:2445.5px;height:2.0px;background:#e2e2e2;"></div>
<div class="b" style="left:114.5px;top:1471.0px;width:2445.5px;height:1.5px;background:#e0e0e0;"></div>
<div class="b" style="left:376.6px;top:1357.0px;width:2.0px;height:115.0px;background:#d7d9dc;"></div>
<div class="b" style="left:1004.5px;top:1357.0px;width:2.0px;height:115.0px;background:#d7d9dc;"></div>
<div class="b" style="left:1274.3px;top:1357.0px;width:2.0px;height:115.0px;background:#d7d9dc;"></div>
<div class="b" style="left:1544.0px;top:1357.0px;width:2.0px;height:115.0px;background:#d7d9dc;"></div>
<div class="b" style="left:1813.8px;top:1357.0px;width:2.0px;height:115.0px;background:#d7d9dc;"></div>
<div class="b" style="left:2083.4px;top:1357.0px;width:2.0px;height:115.0px;background:#d7d9dc;"></div>
<div class="b" style="left:2353.3px;top:1357.0px;width:2.0px;height:115.0px;background:#d7d9dc;"></div>
<div class="b" style="left:970.0px;top:1357.0px;width:10.0px;height:115.0px;background:linear-gradient(90deg,rgba(0,0,0,0.10),rgba(0,0,0,0.035) 45%,rgba(0,0,0,0));"></div>
<span class="t" style="left:399.4px;top:1372.4px;font-size:26.5px;color:#1c2b33;letter-spacing:0.221px;">Results from 42 campaigns</span>
<span class="t" style="left:399.7px;top:1411.7px;font-size:22.6px;color:#68727b;letter-spacing:0.469px;">Excludes deleted items</span>
<span class="t" style="left:968.6px;top:1367.7px;font-size:32px;color:#1c2b33;letter-spacing:-2.480px;">...</span>
<div class="b" style="left:1241.5px;top:1386.2px;width:20.5px;height:2.3px;background:#1c2b33;"></div>
<span class="t" style="left:1047.6px;top:1411.7px;font-size:22.6px;color:#68727b;letter-spacing:0.550px;">Multiple conversions</span>
<span class="t" style="left:1415.5px;top:1372.5px;font-size:26.3px;color:#1c2b33;letter-spacing:0.045px;">1,918,880</span>
<div class="b" style="left:1417.0px;top:1396.4px;width:115.8px;height:3.4px;border-bottom:2.7px dotted #2c3a44;"></div>
<span class="t" style="left:1295.3px;top:1411.7px;font-size:22.6px;color:#68727b;letter-spacing:0.449px;">Accounts Center acc<span style="letter-spacing:-1.2px">...</span></span>
<span class="t" style="left:1683.5px;top:1372.5px;font-size:26.3px;color:#1c2b33;letter-spacing:0.334px;">3,880,851</span>
<span class="t" style="left:1752.8px;top:1411.7px;font-size:22.6px;color:#68727b;letter-spacing:0.706px;">Total</span>
<div class="b" style="left:2051.3px;top:1386.2px;width:20.7px;height:2.3px;background:#1c2b33;"></div>
<span class="t" style="left:1856.8px;top:1411.7px;font-size:22.6px;color:#68727b;letter-spacing:0.592px;">Multiple conversions</span>
<span class="t" style="left:2243.2px;top:1372.5px;font-size:26.3px;color:#1c2b33;letter-spacing:0.635px;">€792.05</span>
<span class="t" style="left:2226.1px;top:1411.7px;font-size:22.6px;color:#68727b;letter-spacing:0.558px;">Total spent</span>
<div class="b" style="left:975.2px;top:1478.8px;width:1537.8px;height:12.8px;background:#c1c1c1;border-radius:7px;"></div>
<div class="b" style="left:2540.5px;top:1088.3px;width:11.8px;height:161.3px;background:#c1c1c1;border-radius:6px;"></div>
<div class="b" style="left:1830.6px;top:1083.3px;width:397.0px;height:51.5px;background:#282828;border-radius:6px;"></div>
<svg class="b" style="left:1850px;top:1134px" width="20" height="9" viewBox="0 0 20 9"><path d="M0 0 H20 L10 8 Z" fill="#282828"/></svg>
<span class="t" style="left:1848.0px;top:1098.2px;font-size:22px;color:#fff;letter-spacing:0.079px;">Per Messaging Conversation Started</span>
<svg class="b" style="left:0;top:0;pointer-events:none" width="2560" height="1511" viewBox="0 0 2560 1511" fill="none" stroke-linecap="round" stroke-linejoin="round"><g stroke="#283741"><rect x="430.2" y="48.7" width="16.9" height="17" rx="3.6" stroke-width="3.4"/><path d="M431 61.6 H446.5" stroke-width="4.6" stroke-linecap="butt"/><path d="M452.2 50.4 H456.7 M452.2 57.5 H456.7 M452.2 65 H456.7" stroke-width="2.6"/></g><path d="M432.3 62.9 H438.6 M441.6 62.9 H444.8" stroke="#f2f4f8" stroke-width="1.5" stroke-linecap="butt"/><path d="M927.67 75.01 A24.1 24.1 0 1 1 959.93 75.01" stroke="#2f6fe0" stroke-width="5.2"/><g stroke="#1c2b33" stroke-width="2.8"><path d="M1923.82 57.39 A12.6 12.6 0 0 1 1944.23 44.14"/><path d="M1947.78 49.61 A12.6 12.6 0 0 1 1927.37 62.86"/></g><path d="M1939.6 45.6 H1945.3 V39.9" stroke="#1c2b33" stroke-width="3" fill="none"/><path d="M1940.3 46.2 H1945.9 V40.6 Z" fill="#1c2b33" stroke="#1c2b33" stroke-width="1.2"/><path d="M1932 61.4 H1926.3 V67.1" stroke="#1c2b33" stroke-width="3" fill="none"/><path d="M1931.3 60.8 H1925.7 V66.4 Z" fill="#1c2b33" stroke="#1c2b33" stroke-width="1.2"/><path d="M2013 44 H2035.5" stroke="#1c2b33" stroke-width="2.9"/><path d="M2018.3 43 L2021.6 39.6 Q2022 39.2 2022.6 39.2 H2026.2 Q2026.8 39.2 2027.2 39.6 L2030.5 43 Z" fill="#1c2b33" stroke="#1c2b33" stroke-width="0.8"/><path d="M2013.4 47.7 H2035.1 L2033.6 65.3 Q2033.3 68.3 2030.3 68.3 H2018.2 Q2015.2 68.3 2014.9 65.3 Z" fill="#1c2b33"/><path d="M2019 51.5 L2019.8 64.3 M2024.25 51.5 V64.3 M2029.5 51.5 L2028.7 64.3" stroke="#ecedf6" stroke-width="1.9" stroke-linecap="butt"/><circle cx="165.3" cy="157.9" r="10.2" stroke="#3578bd" stroke-width="2.7"/><path d="M173.2 165.8 L180.3 172.5" stroke="#3578bd" stroke-width="3.6"/><path d="M262 151.4 Q262 147.1 266.3 147.1 H273.6 Q275.6 147.1 276.6 148.8 L277.6 150.4 Q278.2 151.2 279.4 151.2 H287.4 Q291.7 151.2 291.7 155.5 V168.3 Q291.7 172.6 287.4 172.6 H266.3 Q262 172.6 262 168.3 Z" fill="#3578bd"/><path d="M464.34 171.79 A13.7 13.7 0 1 1 479.26 171.79" stroke="#1c2b33" stroke-width="2.8"/><path d="M471.8 167.6 V155.6 M465.9 161 L471.8 155.1 L477.7 161" stroke="#1c2b33" stroke-width="2.8"/><path d="M670.9 145.2 L655.3 161.1 L664.2 163.2 L661.0 174.3 L676.4 158.7 L667.7 156.7 Z" stroke="#2a3a44" stroke-width="2.2" stroke-linejoin="miter"/><path d="M927.6 145.2 L912.0 161.1 L920.9 163.2 L917.7 174.3 L933.1 158.7 L924.4 156.7 Z" stroke="#2a3a44" stroke-width="2.2" stroke-linejoin="miter"/><path d="M1141.5 158.8 H1162 M1151.75 148.5 V169" stroke="#1c2b33" stroke-width="2.4"/><g stroke="#1c2b33" stroke-width="2"><path d="M2494 151.1 H2497.6 M2509.4 151.1 H2522.6 M2494 164.6 H2507.2 M2518.6 164.6 H2522.6"/><circle cx="2503.6" cy="151.1" r="3.9"/><circle cx="2512.8" cy="164.6" r="3.9"/></g><path d="M153.1 317.3 Q153.1 312.8 157.6 312.8 H166.6 Q168.9 312.8 170 314.8 L171.1 316.9 Q172 318.6 174 318.6 H189.5 Q194 318.6 194 323.1 V345.6 Q194 350.1 189.5 350.1 H157.6 Q153.1 350.1 153.1 345.6 Z" fill="#3578bd"/><path d="M173.4 328 L180.2 340.9 L173.4 338 L166.6 340.9 Z" fill="#fff"/><path d="M542.0999999999999 324.2 L557.4 339.5 M557.4 324.2 L542.0999999999999 339.5" stroke="#fff" stroke-width="2.5"/><path d="M967.5 328.40000000000003 L982.8000000000001 343.70000000000005 M982.8000000000001 328.40000000000003 L967.5 343.70000000000005" stroke="#fff" stroke-width="2.5"/><rect x="637.1" y="319.6" width="12.8" height="12.7" rx="2.6" stroke="#0a0a0a" stroke-width="2.5"/><rect x="655.8" y="319.6" width="12.8" height="12.7" rx="2.6" stroke="#0a0a0a" stroke-width="2.5"/><rect x="637.1" y="338.2" width="12.8" height="12.7" rx="2.6" stroke="#0a0a0a" stroke-width="2.5"/><rect x="655.8" y="338.2" width="12.8" height="12.7" rx="2.6" stroke="#0a0a0a" stroke-width="2.5"/><circle cx="643.6" cy="325.9" r="2.9" fill="#0a0a0a"/><circle cx="662.2" cy="344.5" r="2.9" fill="#0a0a0a"/><rect x="1064" y="320.4" width="29.6" height="29.6" rx="4" stroke="#283640" stroke-width="2.6"/><circle cx="1070.6" cy="327.2" r="2.3" fill="#283640"/><path d="M1077.6 327.2 H1089.2" stroke="#283640" stroke-width="2.5"/><g stroke="#1c2b33" stroke-width="2.2"><rect x="1986.7" y="311.4" width="25.5" height="25.4" rx="6.5"/><path d="M1994.2 315.9 H2004.9"/><path d="M1987 320.2 H2012 M1987 328.8 H2012 M1994.9 320.2 V336.6 M2004 320.2 V336.6" stroke-linecap="butt"/></g><path d="M156.3 420.8 H177 M166.65 410.4 V431.2" stroke="#fff" stroke-width="2.6"/><g stroke="#1c2b33" stroke-width="2.2"><path d="M354 409.3 L347 410.5 Q344.6 411 345 413.4 L348 431.8 Q348.5 434.2 350.9 433.8 L362.5 431.9 Q364.3 431.5 364.8 430.3"/><path d="M358.4 405.9 H366 L373.6 413.5 V426.6 Q373.6 429.9 370.3 429.9 H358.4 Q355.1 429.9 355.1 426.6 V409.2 Q355.1 405.9 358.4 405.9 Z" fill="#fff"/><path d="M366.2 406.3 V410.6 Q366.2 413.3 368.9 413.3 H373.2"/></g><g stroke="#1c2b33" stroke-width="2.2"><path d="M661.7 427.3 L680.9 407.9 Q682 406.8 683.1 407.9 L687.2 412 Q688.3 413.1 687.2 414.2 L667.9 433.6 Q667.3 434.1 666.6 434.1 H663 Q661.6 434.1 661.6 432.7 V428.6 Q661.6 427.8 661.7 427.3 Z"/><path d="M677.3 411.7 L683.4 417.8"/></g><g stroke="#1c2b33" stroke-width="2.2"><rect x="896.2" y="409.6" width="23.2" height="3.9" rx="1.4"/><path d="M903.3 409.3 Q903.8 405.9 907.8 405.9 Q911.8 405.9 912.3 409.3"/><path d="M897.6 414.2 L899.7 431.4 Q900 433.9 902.5 433.9 H913.1 Q915.6 433.9 915.9 431.4 L918 414.2"/><path d="M902.9 417.8 L903.6 430 M907.8 417.8 V430 M912.7 417.8 L912 430" stroke-width="2"/></g><path d="M1009 407.4 H1017.6" stroke="#1c2b33" stroke-width="3.4"/><path d="M1010.6 408 V416.5 Q1010.6 417.6 1009.9 418.5 L1001.6 429.2 Q1000.2 431.2 1001.2 432.9 Q1002.2 434.6 1004.4 434.6 H1022.2 Q1024.4 434.6 1025.4 432.9 Q1026.4 431.2 1025 429.2 L1016.7 418.5 Q1016 417.6 1016 416.5 V408" stroke="#1c2b33" stroke-width="2.2"/><path d="M1004.3 425.6 L1001.6 429.2 Q1000.2 431.2 1001.2 432.9 Q1002.2 434.6 1004.4 434.6 H1022.2 Q1024.4 434.6 1025.4 432.9 Q1026.4 431.2 1025 429.2 L1019.9 422.6 Q1016.5 421.6 1013.3 423.6 Q1010 426.4 1006.9 425.9 Q1005.5 425.3 1004.3 425.6 Z" fill="#1c2b33" stroke="#1c2b33" stroke-width="1"/><g stroke="#1c2b33" stroke-width="2.2"><path d="M1087.3 410.6 Q1087.3 406.3 1091.6 406.3 H1099.8 Q1101.6 406.3 1102.9 407.6 L1115 418.6 Q1117.2 420.8 1115 423 L1104.6 433.4 Q1102.4 435.6 1100.2 433.4 L1088.6 421.6 Q1087.3 420.3 1087.3 418.5 Z"/><circle cx="1094.8" cy="413.4" r="2.5"/></g><g fill="#1c2b33"><rect x="1487.9" y="408.5" width="8.2" height="23.2" rx="0.8"/><rect x="1498.9" y="408.5" width="7.7" height="23.2" rx="0.8"/><rect x="1509.6" y="408.5" width="8" height="23.2" rx="0.8"/></g><g fill="#1c2b33"><rect x="1915.2" y="407.5" width="25.5" height="6.6" rx="0.6"/><rect x="1924.8" y="417.2" width="15.9" height="6.3" rx="0.6"/><rect x="1924.8" y="426.5" width="15.9" height="6.3" rx="0.6"/></g><path d="M2222.8 411 L2228 412 Q2229.5 412.4 2229.2 413.9 L2225.6 433.2 Q2225.2 434.9 2223.5 434.6 L2207.5 431.8 L2222.8 431.8 Z" fill="#1c2b33" stroke="#1c2b33" stroke-width="0.8"/><rect x="2199.8" y="405.1" width="22.2" height="25.4" rx="2.4" fill="#1c2b33"/><path d="M2203.8 405.3 V430.3" stroke="#fff" stroke-width="1.1" stroke-linecap="butt"/><path d="M2208.9 411.8 H2218.2 M2208.9 415.8 H2218.2" stroke="#fff" stroke-width="1.7" stroke-linecap="butt"/><path d="M2223 417.5 L2226 418 M2223 421.8 L2225.2 422.2" stroke="#fff" stroke-width="1.1"/><g stroke="#1c2b33" stroke-width="2.7"><path d="M2345.4 409.2 H2340.4 Q2336.4 409.2 2336.4 413.2 V427.4 Q2336.4 431.4 2340.4 431.4 H2354.7 Q2358.7 431.4 2358.7 427.4 V421.4"/><path d="M2347 420.4 L2358.8 408.8 M2351.6 408.5 H2359.2 V416.2"/></g><g stroke="#1c2b33" stroke-width="2.2"><rect x="2494.4" y="406.7" width="27.3" height="26.8" rx="3.6"/><path d="M2494.8 428 L2504.2 419.6 L2507.7 422.3 L2516.6 414.6 M2511.2 413.9 L2517.2 414 L2517.3 420"/></g><g transform="translate(554.7,1112.4) scale(1.0)" fill="#676f78"><path d="M0 17.3 V21.2 Q0 22 0.8 22 H4.7 L17.6 9.1 L12.9 4.4 Z"/><path d="M14.4 2.9 L16.6 0.7 Q17.4 -0.1 18.2 0.7 L21.3 3.8 Q22.1 4.6 21.3 5.4 L19.1 7.6 Z"/></g><g transform="translate(568.1,1153.4) scale(0.9727272727272727)" fill="#3a3a3a"><path d="M0 17.3 V21.2 Q0 22 0.8 22 H4.7 L17.6 9.1 L12.9 4.4 Z"/><path d="M14.4 2.9 L16.6 0.7 Q17.4 -0.1 18.2 0.7 L21.3 3.8 Q22.1 4.6 21.3 5.4 L19.1 7.6 Z"/></g><path d="M396 1168 V1172.7" stroke="#3a3a3a" stroke-width="3.5"/><path d="M401.7 1161.3 V1172.7" stroke="#3a3a3a" stroke-width="3.5"/><path d="M407.25 1164.1 V1172.7" stroke="#3a3a3a" stroke-width="3.5"/><path d="M413 1156.3 V1172.7" stroke="#3a3a3a" stroke-width="3.5"/><path d="M660.3 1156.4 Q659.2 1157 659.5 1158.6 L662.4 1172.8 Q662.8 1174.6 664.6 1175 L666.3 1175.3" stroke="#3a3a3a" stroke-width="1.5"/><path d="M669.6 1153.8 H675 V1158 Q675 1160.4 677.4 1160.4 H681.7 V1170.3 Q681.7 1172.6 679.4 1172.6 H669.6 Q667.3 1172.6 667.3 1170.3 V1156.1 Q667.3 1153.8 669.6 1153.8 Z M676.6 1154.2 L681.3 1158.9 H677.4 Q676.6 1158.9 676.6 1158.1 Z" fill="#3a3a3a"/><rect x="810.1" y="1153.5" width="22" height="22.2" rx="2.8" fill="#3a3a3a"/><path d="M811 1172.4 L819.3 1165.7 L822.1 1167.5 L827.8 1162.2 M823.4 1161.1 L828.5 1161.4 L828.7 1166.6" stroke="#e4e4e4" stroke-width="1.7"/><circle cx="882" cy="1163.7" r="2.9" fill="#1c2b33"/><circle cx="891.3" cy="1163.7" r="2.9" fill="#1c2b33"/><circle cx="900.6" cy="1163.7" r="2.9" fill="#1c2b33"/><circle cx="744.4" cy="1386.6" r="10.9" fill="#1c2b33"/><circle cx="744.4" cy="1380.7" r="1.7" fill="#fff"/><path d="M742.2 1384.8 H745 V1392.3 M742 1392.3 H747.6" stroke="#fff" stroke-width="2.1" stroke-linecap="butt" stroke-linejoin="miter"/></svg>
</div></body></html>
